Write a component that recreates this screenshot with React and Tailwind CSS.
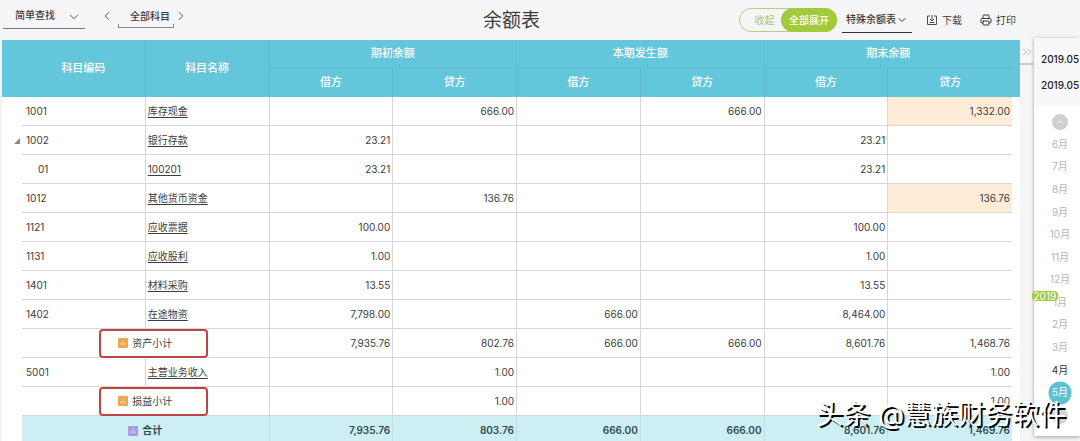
import { Printer, ChevronDown, ChevronLeft, ChevronRight, ChevronsRight, ChevronUp } from "lucide-react";

const rows = [
  { code: "1001", name: "库存现金", values: ["", "666.00", "", "666.00", "", "1,332.00"], warn: true },
  { code: "1002", name: "银行存款", values: ["23.21", "", "", "", "23.21", ""], open: true },
  { code: "01", name: "100201", values: ["23.21", "", "", "", "23.21", ""], child: true },
  { code: "1012", name: "其他货币资金", values: ["", "136.76", "", "", "", "136.76"], warn: true },
  { code: "1121", name: "应收票据", values: ["100.00", "", "", "", "100.00", ""] },
  { code: "1131", name: "应收股利", values: ["1.00", "", "", "", "1.00", ""] },
  { code: "1401", name: "材料采购", values: ["13.55", "", "", "", "13.55", ""] },
  { code: "1402", name: "在途物资", values: ["7,798.00", "", "666.00", "", "8,464.00", ""] },
  { subtotal: "资产小计", values: ["7,935.76", "802.76", "666.00", "666.00", "8,601.76", "1,468.76"] },
  { code: "5001", name: "主营业务收入", values: ["", "1.00", "", "", "", "1.00"] },
  { subtotal: "损益小计", values: ["", "1.00", "", "", "", "1.00"] },
];

const totals = ["7,935.76", "803.76", "666.00", "666.00", "8,601.76", "1,469.76"];

const groups = ["期初余额", "本期发生额", "期末余额"];

const months = ["6月", "7月", "8月", "9月", "10月", "11月", "12月", "1月", "2月", "3月", "4月", "5月"];

function SumIcon({ className }) {
  return (
    <svg viewBox="0 0 10 10" className={className} aria-hidden="true">
      <rect width="10" height="10" rx="1" fill="currentColor" />
      <path d="M3 5v2.5M5 3v4.5M7 5v2.5" stroke="#fff" strokeOpacity="0.6" strokeWidth="0.9" />
    </svg>
  );
}

function SaveIcon() {
  return (
    <svg
      viewBox="0 0 12 12"
      className="size-3"
      fill="none"
      stroke="currentColor"
      strokeWidth="0.9"
      aria-hidden="true"
    >
      <path d="M4 2H1.5v8.5h9V2H8M6 1v6M4 5l2 2 2-2M3.5 8.5h5" />
    </svg>
  );
}

function Toolbar() {
  return (
    <header className="grid h-10 grid-cols-[1fr_auto_1fr] items-center pr-16 pl-[3px] text-[10px] font-medium">
      <div className="flex items-center">
        <div className="relative -mt-2 w-[82px] border-b border-[#777]">
          <select
            aria-label="查找方式"
            className="h-6 w-full appearance-none bg-transparent pl-3 outline-none"
          >
            <option>简单查找</option>
          </select>
          <ChevronDown size={14} strokeWidth={1.5} className="pointer-events-none absolute top-1.5 right-1" />
        </div>
        <button type="button" aria-label="上一个" className="-mt-2 ml-[15px]">
          <ChevronLeft size={14} strokeWidth={1.5} />
        </button>
        <div className="relative -mt-1 ml-1">
          <button type="button" className="h-5 w-[56px] pb-1 pl-2 whitespace-nowrap">
            全部科目
          </button>
          <span className="pointer-events-none absolute inset-x-0 bottom-0 h-1 border-x border-b border-[#888]" />
        </div>
        <button type="button" aria-label="下一个" className="-mt-2">
          <ChevronRight size={14} strokeWidth={1.5} />
        </button>
      </div>

      <h1 className="pt-0.5 pl-1 text-[19px] font-normal">余额表</h1>

      <div className="flex items-center justify-end">
        <div className="flex h-6 w-[98px] rounded-full border border-[#b5cf7d]">
          <button type="button" className="flex-1 pl-2 font-normal text-[#a9c46c]">
            收起
          </button>
          <button type="button" className="-my-px -mr-px w-14 rounded-full bg-[#a2ca3c] text-white">
            全部展开
          </button>
        </div>
        <div className="relative ml-[5px] w-[70px] border-b border-[#333]">
          <select
            aria-label="特殊余额表"
            className="h-6 w-full appearance-none bg-transparent pl-1 outline-none"
          >
            <option>特殊余额表</option>
          </select>
          <ChevronDown size={12} strokeWidth={2} className="pointer-events-none absolute top-1.5 right-1" />
        </div>
        <button type="button" className="ml-[14px] flex items-center gap-1 font-normal whitespace-nowrap">
          <SaveIcon />
          下载
        </button>
        <button type="button" className="ml-[18px] flex items-center gap-1 font-normal whitespace-nowrap">
          <Printer size={12} strokeWidth={2} />
          打印
        </button>
      </div>
    </header>
  );
}

function BalanceTable() {
  return (
    <table className="w-full table-fixed border-separate border-spacing-0 bg-white text-[10px]">
      <colgroup>
        <col className="w-5" />
        <col span={8} />
        <col className="w-2" />
      </colgroup>
      <thead className="bg-[#64c6da] text-[11px] text-white">
        <tr className="h-7">
          <th colSpan={2} rowSpan={2} className="border-r border-[#5cb9cd] p-0 pl-5 font-medium">
            科目编码
          </th>
          <th rowSpan={2} className="border-r border-[#5cb9cd] p-0 font-medium">
            科目名称
          </th>
          {groups.map((group, i) => (
            <th
              key={group}
              colSpan={2}
              className={`border-b border-[#5fbfd3] p-0 font-medium ${i === 2 ? "" : "border-r"}`}
            >
              {group}
            </th>
          ))}
          <td rowSpan={2} className="p-0" />
        </tr>
        <tr className="h-[29px]">
          {groups.map((group, i) => [
            <th key={`${group}-debit`} className="border-r border-[#5cb9cd] p-0 font-medium">
              借方
            </th>,
            <th
              key={`${group}-credit`}
              className={`border-[#5cb9cd] p-0 font-medium ${i === 2 ? "" : "border-r"}`}
            >
              贷方
            </th>,
          ])}
        </tr>
      </thead>
      <tbody>
        {rows.map((row) => (
          <tr key={row.code || row.subtotal} className="h-[29px]">
            <td className="p-0">
              {row.open && (
                <button type="button" aria-label="收起下级" className="ml-3 block">
                  <svg viewBox="0 0 6 6" className="size-1.5" aria-hidden="true">
                    <path d="M6 0v6H0z" fill="#888" />
                  </svg>
                </button>
              )}
            </td>
            {row.subtotal ? (
              <td colSpan={2} className="border-r border-b border-[#d8d6da] p-0">
                <div className="flex justify-center">
                  <span className="relative flex items-center gap-1">
                    <SumIcon className="size-2.5 text-[#e8a94c]" />
                    {row.subtotal}
                    <span className="absolute -inset-y-[7px] -right-9 -left-[19px] rounded border-2 border-[#bf4640]" />
                  </span>
                </div>
              </td>
            ) : (
              <>
                <td className={`border-r border-b border-[#d8d6da] py-0 ${row.child ? "pl-4" : "pl-1"}`}>
                  {row.code}
                </td>
                <td className="border-r border-b border-[#d8d6da] py-0 pl-0.5">
                  <a href="#" className="underline underline-offset-2">
                    {row.name}
                  </a>
                </td>
              </>
            )}
            {row.values.map((value, i) => (
              <td
                key={i}
                className={`border-b border-[#d8d6da] py-0 pr-0.5 text-right ${i < 5 ? "border-r" : ""} ${
                  row.warn && i === 5 ? "bg-[#feecd6]" : ""
                }`}
              >
                {value}
              </td>
            ))}
            <td className="p-0" />
          </tr>
        ))}
      </tbody>
      <tfoot>
        <tr className="h-[29px] font-semibold text-[#2f4a50]">
          <td className="p-0" />
          <td colSpan={2} className="border-r border-[#bfe0e5] bg-[#cdeef2] p-0">
            <div className="flex items-center justify-center gap-1">
              <SumIcon className="size-2.5 text-[#a99be0]" />
              合计
            </div>
          </td>
          {totals.map((value, i) => (
            <td
              key={i}
              className={`border-[#bfe0e5] bg-[#cdeef2] py-0 pr-0.5 text-right ${i < 5 ? "border-r" : ""}`}
            >
              {value}
            </td>
          ))}
          <td className="p-0" />
        </tr>
      </tfoot>
    </table>
  );
}

function PeriodPanel() {
  return (
    <aside className="-mt-0.5 w-[46px] shrink-0 bg-white pb-3 shadow-[0_1px_4px_rgba(0,0,0,0.35)]">
      <div className="bg-[#f8f8fa] py-2 pl-[7px] text-[10px] font-medium text-[#222]">
        <div className="h-[26px] leading-[26px]">2019.05</div>
        <div className="h-[26px] leading-[26px]">2019.05</div>
      </div>
      <div className="flex flex-col items-center pt-2 pl-1.5">
        <button
          type="button"
          aria-label="向前"
          className="mb-[3px] grid size-4 place-items-center rounded-full bg-[#cfcfcf] text-white"
        >
          <ChevronUp size={10} />
        </button>
        <div className="flex h-[271px] flex-col text-[10px] text-[#b5b5b5]">
          {months.map((month) => (
            <button
              key={month}
              type="button"
              className={`relative flex flex-1 items-center justify-center whitespace-nowrap ${
                month === "4月" ? "text-[#333]" : ""
              } ${month === "5月" ? "text-white" : ""}`}
            >
              {month === "5月" && (
                <span className="absolute top-1/2 left-1/2 size-[23px] -translate-x-1/2 -translate-y-1/2 rounded-full bg-[#5fc0d0]" />
              )}
              {month === "1月" && (
                <span className="absolute top-0 right-3 z-10 rounded-sm bg-[#a2ca3c] px-0.5 leading-[10px] text-white">
                  2019
                </span>
              )}
              <span className="relative">{month}</span>
            </button>
          ))}
        </div>
        <button
          type="button"
          aria-label="向后"
          className="mt-1 grid size-4 place-items-center rounded-full bg-[#d5d5d5] text-white"
        >
          <ChevronDown size={10} />
        </button>
      </div>
    </aside>
  );
}

export default function App() {
  return (
    <div className="relative h-screen overflow-hidden bg-[#f5f5f7] font-[Inter,'Noto_Sans_CJK_SC',sans-serif] text-[#3c3c3c]">
      <Toolbar />
      <main className="flex items-start pl-0.5">
        <div className="min-w-0 flex-1">
          <BalanceTable />
        </div>
        <button
          type="button"
          aria-label="收起面板"
          className="grid h-[25px] w-[14px] shrink-0 place-items-center border-b-2 border-[#ccc] bg-[#f8f8fa] text-[#aaa]"
        >
          <ChevronsRight size={14} strokeWidth={1.5} />
        </button>
        <PeriodPanel />
      </main>
      <p className="pointer-events-none absolute right-3.5 bottom-2.5 z-20 text-[27px] leading-8 whitespace-nowrap text-white [text-shadow:2px_2px_0_#000]">
        头条 @慧族财务软件
      </p>
    </div>
  );
}
